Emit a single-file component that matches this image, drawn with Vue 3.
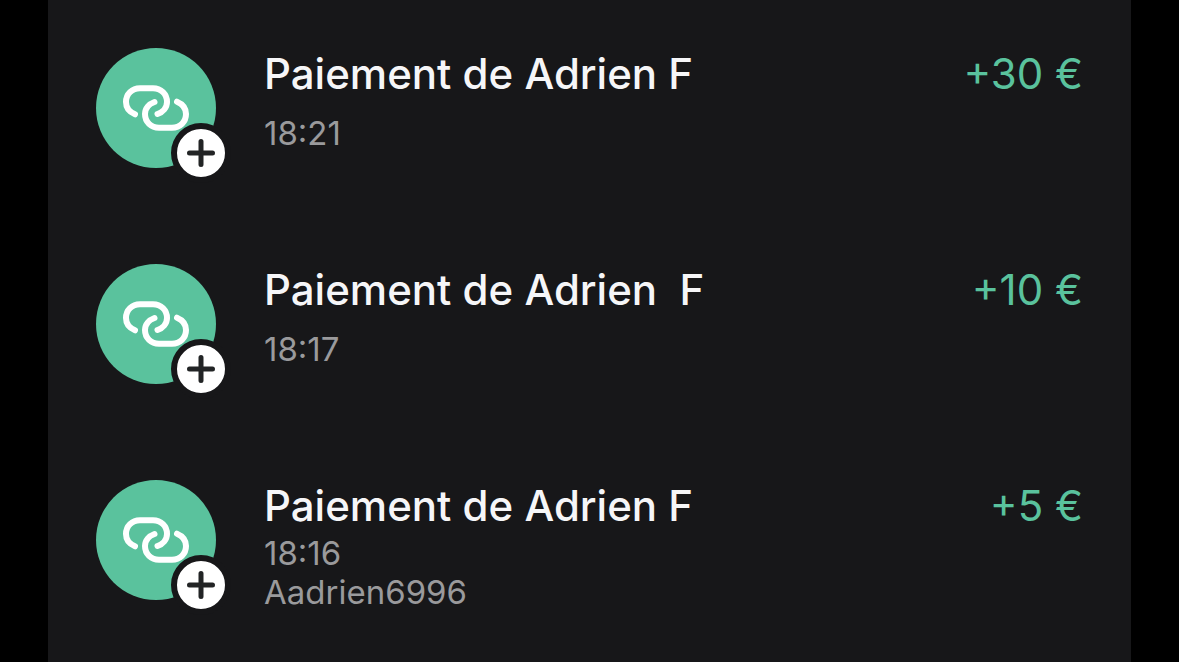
<template>
  <main class="screen">
    <ul class="payments">
      <li v-for="payment in payments" :key="payment.time" class="payment">
        <div class="avatar">
          <svg class="link-icon" viewBox="0 0 66 46" aria-hidden="true">
            <path d="M12 29.3C6.500 27 3 22.500 3 17C3 9 9 3.300 17 3.300H30C38 3.300 44 9 44 17C44 22.500 40 27 34.500 29" />
            <path d="M54 16.700C59.500 19 63 23.500 63 29C63 37 57 42.700 49 42.700H36C28 42.700 22 37 22 29C22 23.500 26 19 31.500 17" />
          </svg>
          <span class="badge">
            <svg viewBox="0 0 48 48" aria-hidden="true">
              <path d="M24 12.500V35.500M12.500 24H35.500" />
            </svg>
          </span>
        </div>
        <div class="details">
          <h2 class="title">{{ payment.title }}</h2>
          <p class="meta" :class="{ compact: payment.note }">
            <time>{{ payment.time }}</time>
            <span v-if="payment.note">{{ payment.note }}</span>
          </p>
        </div>
        <span class="amount">{{ payment.amount }}</span>
      </li>
    </ul>
  </main>
</template>

<script setup>
const payments = [
  { title: 'Paiement de Adrien F', time: '18:21', amount: '+30 €' },
  { title: 'Paiement de Adrien  F', time: '18:17', amount: '+10 €' },
  { title: 'Paiement de Adrien F', time: '18:16', note: 'Aadrien6996', amount: '+5 €' }
]
</script>

<style>
body {
  margin: 0;
  background: #000;
}
</style>

<style scoped>
.screen {
  box-sizing: border-box;
  min-height: 100vh;
  margin: 0 48px;
  background: #171719;
  font-family: Inter, sans-serif;
}

.payments {
  margin: 0;
  padding: 48px 48px 0;
  list-style: none;
}

.payment {
  display: flex;
  align-items: flex-start;
  margin-bottom: 86px;
}

.payment:last-child {
  margin-bottom: 0;
}

.avatar {
  position: relative;
  display: flex;
  flex: none;
  align-items: center;
  justify-content: center;
  width: 120px;
  height: 120px;
  margin-right: 48px;
  border-radius: 50%;
  background: #5ac29d;
}

.link-icon {
  width: 66px;
  height: 46px;
  fill: none;
  stroke: #fff;
  stroke-width: 6;
  stroke-linecap: round;
}

.badge {
  position: absolute;
  right: -15px;
  bottom: -15px;
  width: 48px;
  height: 48px;
  border: 6px solid #171719;
  border-radius: 50%;
  background: #fff;
}

.badge svg {
  display: block;
  fill: none;
  stroke: #222425;
  stroke-width: 5;
  stroke-linecap: round;
}

.details {
  flex: 1;
  min-width: 0;
  min-height: 130px;
}

.title {
  margin: 0;
  color: #f6f6f8;
  font-size: 42px;
  font-weight: 500;
  line-height: 52px;
  white-space: pre;
}

.meta {
  display: flex;
  flex-direction: column;
  margin: 14px 0 0;
  color: #9a9a9c;
  font-size: 33px;
  line-height: 39px;
}

.meta.compact {
  margin-top: 2px;
}

.amount {
  color: #5ac29d;
  font-size: 42px;
  font-weight: 400;
  line-height: 52px;
  white-space: nowrap;
}
</style>
